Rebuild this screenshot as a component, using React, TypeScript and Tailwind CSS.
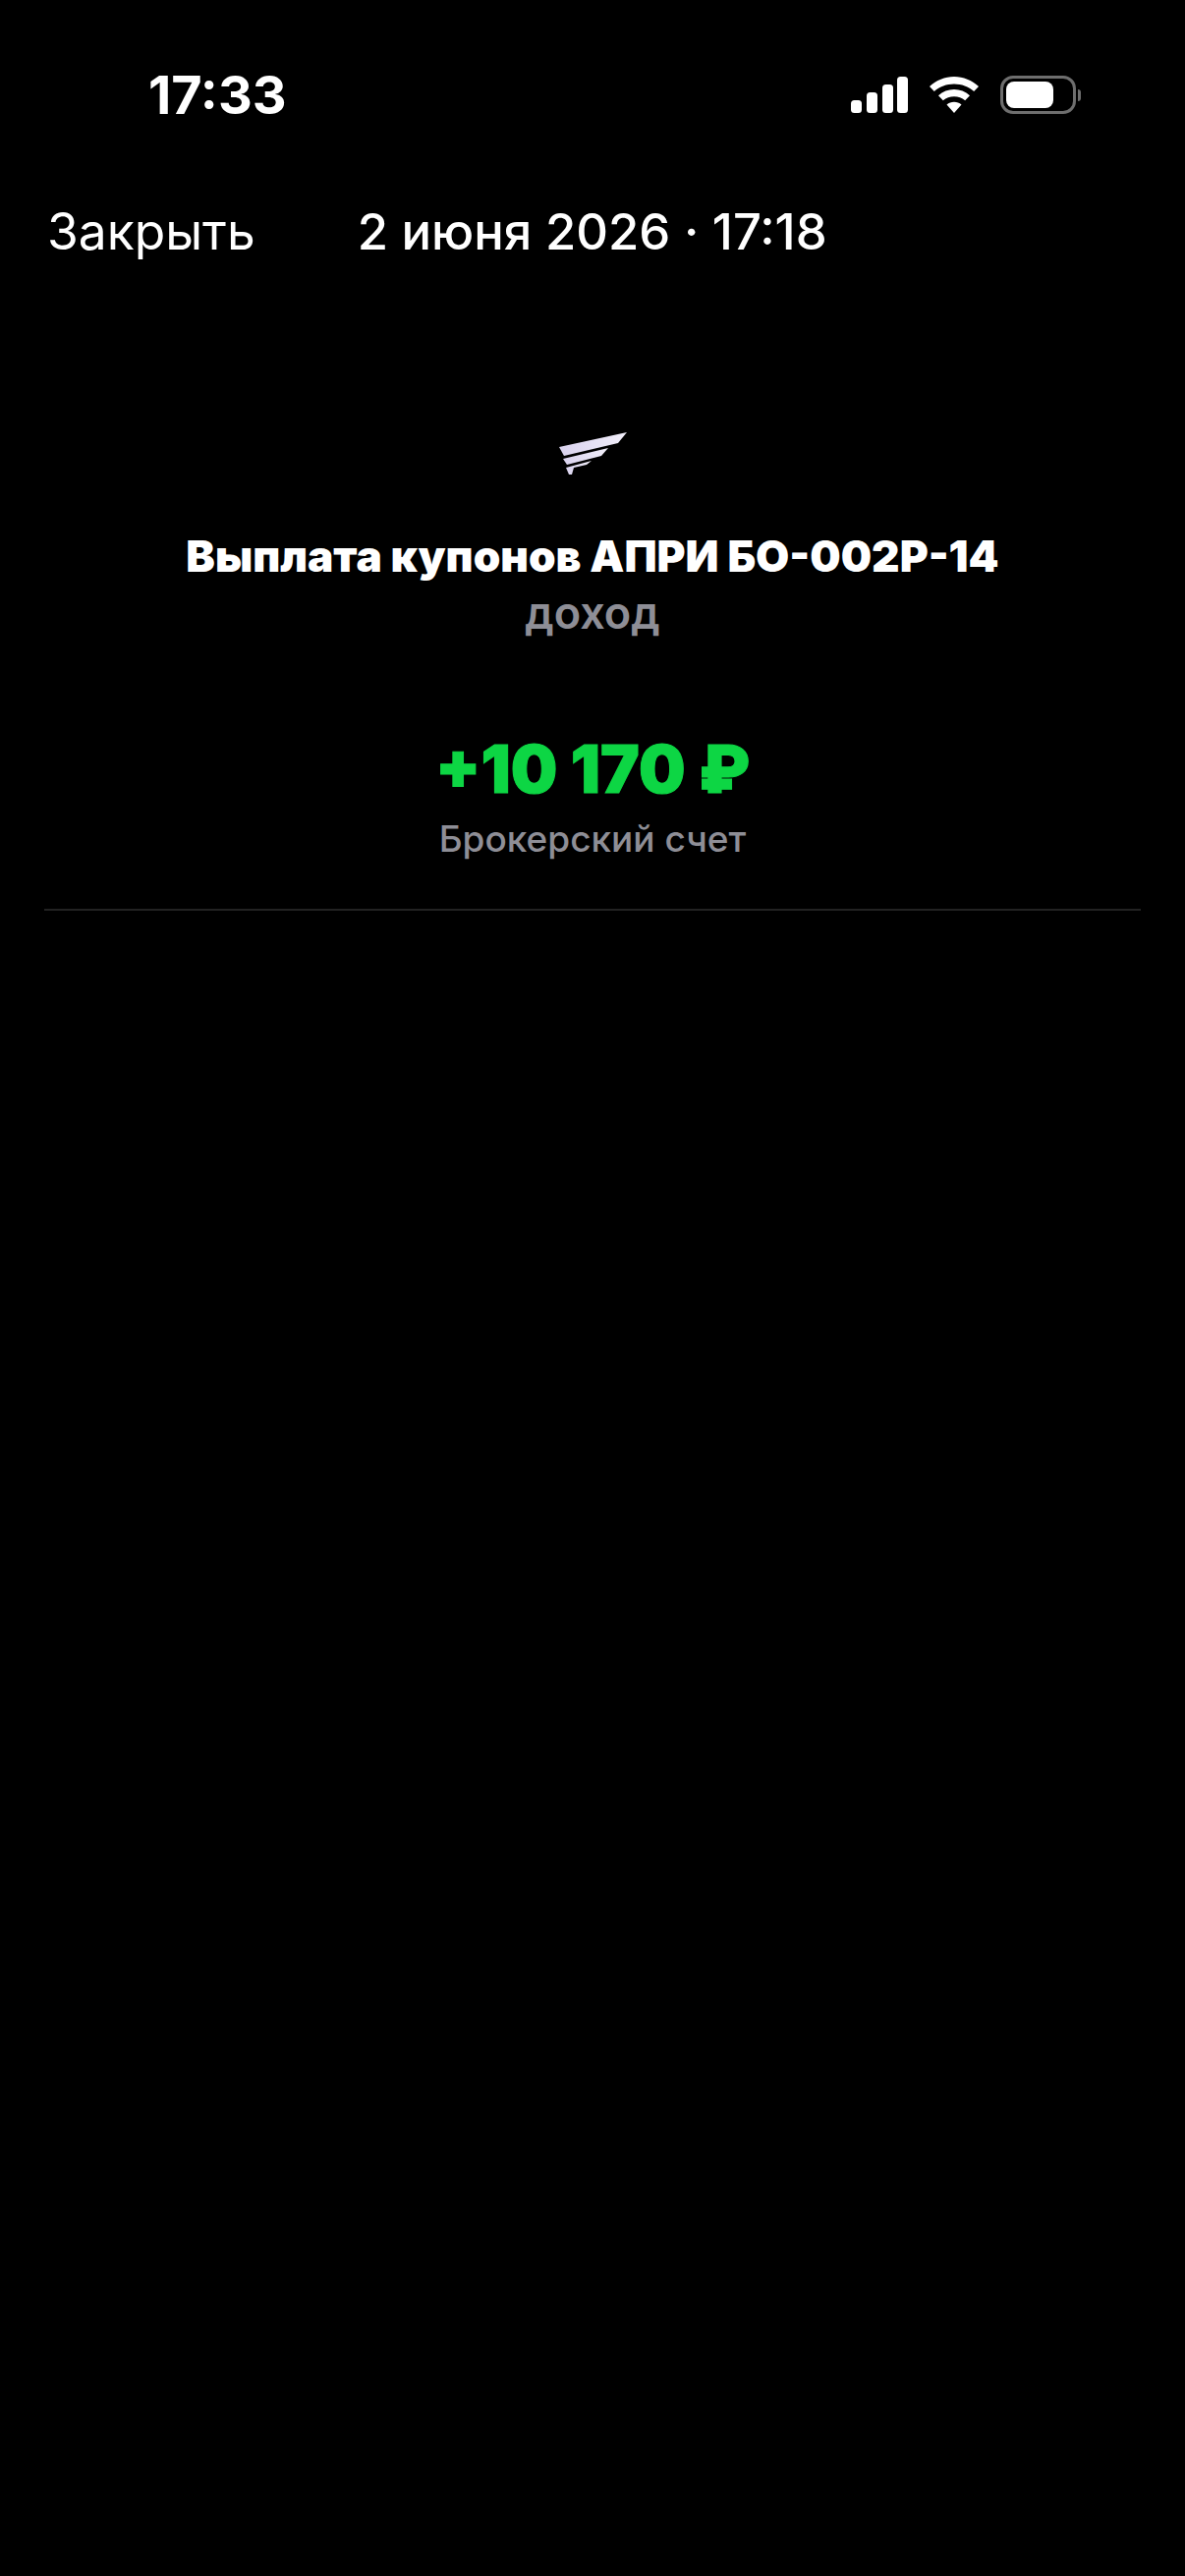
const font = "font-['Inter','Noto_Sans',sans-serif]";

function Signal() {
  return (
    <svg width="58" height="37" viewBox="0 0 58 37" fill="white">
      <rect x="0" y="24" width="11" height="13" rx="3.5" />
      <rect x="16" y="16" width="11" height="21" rx="3.5" />
      <rect x="32" y="8" width="11" height="29" rx="3.5" />
      <rect x="47" y="0" width="11" height="37" rx="3.5" />
    </svg>
  );
}

function Wifi() {
  return (
    <svg width="50" height="37" viewBox="0 0 50 37" fill="white">
      <path d="M25 0C34.500 0 43 3.700 50 10L45.200 15C39.700 10.200 32.700 7.500 25 7.500S10.300 10.200 4.800 15L0 10C7 3.700 15.500 0 25 0Z" />
      <path d="M25 13C31 13 36.500 15.200 41 19.200L36.200 24.200C33.100 21.600 29.200 20.300 25 20.300S16.900 21.600 13.800 24.200L9 19.200C13.500 15.200 19 13 25 13Z" />
      <path d="M25 25.800C27.800 25.800 30.400 26.700 32.500 28.500L25 37 17.500 28.500C19.600 26.700 22.200 25.800 25 25.800Z" />
    </svg>
  );
}

function Battery() {
  return (
    <div className="flex items-center gap-[2px]">
      <div className="flex h-[39px] w-[77px] items-center rounded-[13px] border-[3px] border-[#6e6e6e] p-[3px]">
        <div className="h-full w-[48px] rounded-[8px] bg-white" />
      </div>
      <div className="h-[12px] w-[3px] rounded-r-full bg-[#6e6e6e]" />
    </div>
  );
}

function Logo() {
  return (
    <svg width="70" height="44" viewBox="0 0 70 44">
      <defs>
        <linearGradient id="wing" x1="0" y1="0" x2="1" y2="0">
          <stop offset="0" stopColor="#d9d2ee" />
          <stop offset="1" stopColor="#f1eef9" />
        </linearGradient>
      </defs>
      <polygon points="0,15 69,0 60,11 5,24" fill="url(#wing)" />
      <polygon points="4,27 50,16 43,24 8,33" fill="url(#wing)" />
      <polygon points="7,36 33,29 28,33 15,36 13,43 10,43" fill="url(#wing)" />
    </svg>
  );
}

export default function App() {
  return (
    <div className={`${font} flex min-h-[2622px] w-[1206px] flex-col bg-black text-white`}>
      <div className="flex h-[194px] items-center justify-between pb-[1px] pl-[151px] pr-[106px]">
        <span className="text-[54px] leading-none font-bold">17:33</span>
        <div className="flex items-center gap-[22px]">
          <Signal />
          <Wifi />
          <Battery />
        </div>
      </div>
      <div className="flex h-[84px] items-center gap-[104px] pl-[48px]">
        <span className="text-[51.500px] leading-none">Закрыть</span>
        <span className="text-[50.800px] leading-none font-medium">2 июня 2026 · 17:18</span>
      </div>
      <div className="mt-[162px] flex h-[44px] justify-center pl-[2px]">
        <Logo />
      </div>
      <h1 className="mt-[57px] text-center text-[44.200px] leading-[50px] font-black">Выплата купонов АПРИ БО-002Р-14</h1>
      <div className="mt-[8px] text-center text-[45px] leading-[50px] font-semibold text-[#8e8e96]">доход</div>
      <div className="mt-[94px] text-center text-[67px] leading-[80px] font-black text-[#0dd644] [-webkit-text-stroke:1px_#0dd644]">+10 170 ₽</div>
      <div className="mt-[9px] text-center text-[37px] leading-[44px] font-medium text-[#8e8e96]">Брокерский счет</div>
      <div className="mx-[45px] mt-[49px] h-[2px] bg-[#222222]" />
    </div>
  );
}
